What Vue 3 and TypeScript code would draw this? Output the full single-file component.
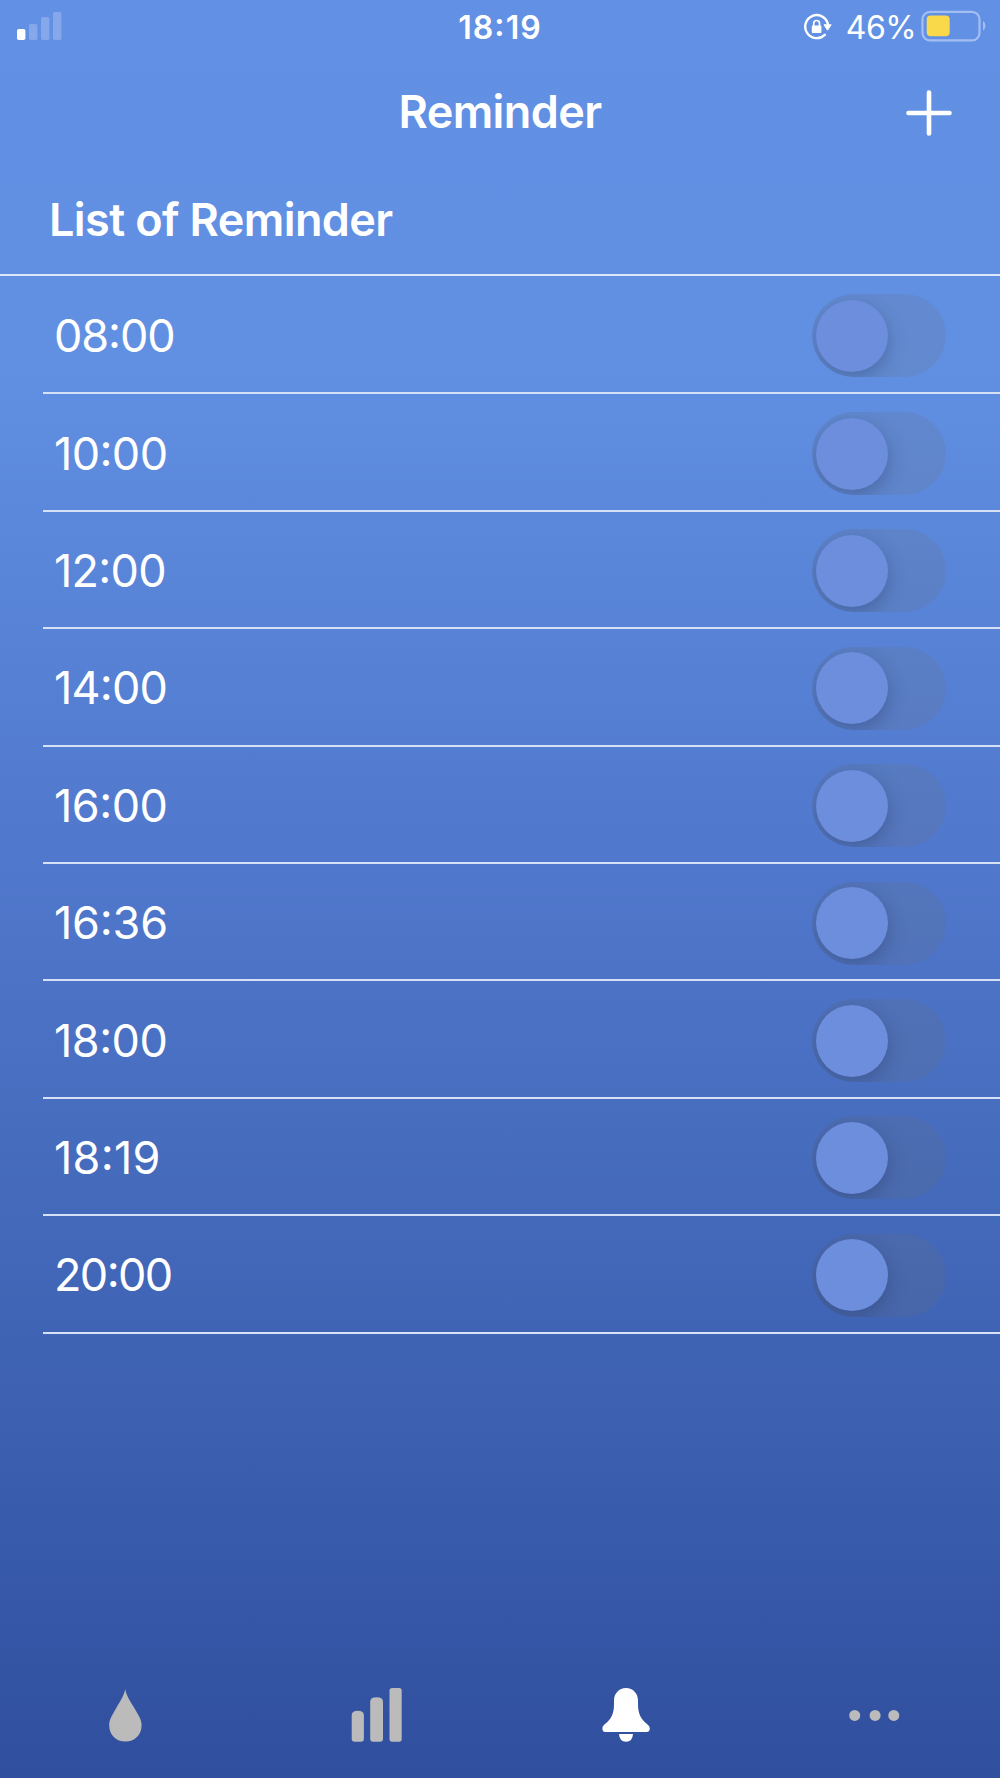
<script setup lang="ts">
import { ref } from 'vue'

interface Reminder {
  time: string
  tracking: number
  enabled: boolean
}

const schedule: [string, number][] = [
  ['08:00', -1.1],
  ['10:00', -0.6],
  ['12:00', -0.7],
  ['14:00', -0.8],
  ['16:00', -0.5],
  ['16:36', -0.2],
  ['18:00', -0.5],
  ['18:19', 0.3],
  ['20:00', -1.6],
]

const reminders = ref<Reminder[]>(
  schedule.map(([time, tracking]) => ({ time, tracking, enabled: false })),
)
</script>

<template>
  <div class="screen">
    <header class="status">
      <svg class="signal" width="50" height="34" viewBox="0 0 50 34" fill="#fff">
        <rect x="0" y="17" width="8.4" height="11" rx="1.8" />
        <g opacity=".22">
          <rect x="12" y="12" width="8.4" height="16" rx="1.8" />
          <rect x="24" y="5" width="8.4" height="23" rx="1.8" />
          <rect x="36" y="0" width="8.4" height="28" rx="1.8" />
        </g>
      </svg>
      <span class="clock">18:19</span>
      <div class="status-right">
        <svg class="lock" width="30" height="28" viewBox="0 0 30 28" fill="none" stroke="#fff">
          <path d="M21.8 21.8A11.5 11.5 0 1 1 24.9 11" stroke-width="2.4" stroke-linecap="round" />
          <path d="M21 11.8H28.2L24.5 17.2Z" fill="#fff" stroke-width="1" stroke-linejoin="round" />
          <rect x="8.8" y="12.5" width="9.6" height="7.6" rx="1.2" fill="#fff" stroke="none" />
          <path d="M10.7 13V10.4a2.9 2.9 0 0 1 5.8 0V13" stroke-width="1.7" />
        </svg>
        <span class="percent">46%</span>
        <svg class="battery" width="66" height="32" viewBox="0 0 66 32">
          <rect x="1.5" y="1.8" width="57" height="28.6" rx="7.5" fill="none" stroke="#a3bef2" stroke-width="2.2" />
          <rect x="5.7" y="5.6" width="23" height="20.6" rx="4" fill="#f9d84a" />
          <path d="M62 11q2.4 1.3 2.4 4.8t-2.4 4.8z" fill="#a3bef2" />
        </svg>
      </div>
    </header>

    <div class="titlebar">
      <h1>Reminder</h1>
      <button class="add" aria-label="Add reminder">
        <svg width="48" height="48" viewBox="0 0 48 48" stroke="#fff" stroke-width="4.6" stroke-linecap="round">
          <path d="M24 3.5V44.500M3.500 24H44.500" />
        </svg>
      </button>
    </div>

    <h2>List of Reminder</h2>

    <ul class="list">
      <li v-for="item in reminders" :key="item.time">
        <span class="time" :style="{ letterSpacing: item.tracking + 'px' }">{{ item.time }}</span>
        <button
          class="switch"
          :class="{ on: item.enabled }"
          role="switch"
          :aria-checked="item.enabled"
          :aria-label="item.time"
          @click="item.enabled = !item.enabled"
        >
          <span class="knob"></span>
        </button>
      </li>
    </ul>

    <nav class="tabs">
      <svg viewBox="0 0 60 60" width="60" height="60" fill="#bbb">
        <path d="M30.2 4C31 9 34 14.5 39 22.5C43.5 30 46.6 34.5 46.6 40.2C46.6 50 39.6 56.5 30.4 56.5C21.2 56.5 14.200 50 14.200 40.200C14.200 34.500 17.300 30 21.500 22.500C26.500 14.500 29.400 9 30.200 4Z" />
      </svg>
      <svg viewBox="0 0 60 60" width="60" height="60" fill="#bbb">
        <path d="M6.700 30.300Q6.700 25.800 12.800 25.800T18.900 30.300V53.700Q18.900 56.700 15.900 56.700H9.700Q6.700 56.700 6.700 53.700Z" />
        <path d="M25.200 16.500Q25.200 12.200 31.600 12.200T38 16.500V53.700Q38 56.700 35 56.700H28.200Q25.200 56.700 25.200 53.700Z" />
        <rect x="44.5" y="3" width="12.2" height="53.7" rx="2.6" />
      </svg>
      <svg viewBox="0 0 60 60" width="60" height="60" fill="#fff">
        <path d="M31 3C38 3 43 8.500 43 15.500V19C43 29.500 46 34 52 39C54 40.700 54.800 42 54.800 43.500C54.800 46 53.500 47 51.500 47H10.500C8.300 47 7.400 46 7.400 43.500C7.400 42 8 40.700 10 39C16 34 19 29.500 19 19V15.500C19 8.500 24 3 31 3Z" />
        <path d="M24 49H38Q37.500 56.800 31 56.800T24 49Z" />
      </svg>
      <svg viewBox="0 0 60 60" width="60" height="60" fill="#bbb">
        <circle cx="9.7" cy="30.4" r="5.5" />
        <circle cx="30.1" cy="30.4" r="5.5" />
        <circle cx="48.8" cy="30.4" r="5.5" />
      </svg>
    </nav>
  </div>
</template>

<style>
body {
  margin: 0;
}
</style>

<style scoped>
.screen {
  box-sizing: border-box;
  width: 1000px;
  height: 1778px;
  display: flex;
  flex-direction: column;
  overflow: hidden;
  color: #fff;
  font-family: Inter, 'Liberation Sans', sans-serif;
  font-feature-settings: 'calt' 1;
  background: linear-gradient(#6290e4 0, #6190e3 350px, #5078cc 850px, #4267b8 1270px, #304f9e 1778px);
}
button {
  padding: 0;
  border: 0;
  background: none;
}
.status {
  height: 54px;
  display: grid;
  grid-template-columns: 1fr auto 1fr;
  align-items: start;
}
.signal {
  margin: 12px 0 0 17px;
}
.clock {
  margin-top: 9px;
  font-size: 32px;
  line-height: 38px;
  font-weight: 600;
  letter-spacing: 1.1px;
}
.status-right {
  display: flex;
  justify-content: flex-end;
  padding-right: 13px;
}
.lock {
  margin: 13px 13px 0 0;
}
.percent {
  margin: 9px 5px 0 0;
  font-size: 32px;
  line-height: 38px;
  letter-spacing: -0.6px;
}
.battery {
  margin-top: 10px;
}
.titlebar {
  height: 116px;
  display: grid;
  grid-template-columns: 1fr auto 1fr;
  align-items: start;
}
h1,
h2 {
  margin: 0;
  font-size: 45px;
  line-height: 56px;
  font-weight: 600;
  letter-spacing: -0.6px;
}
h1 {
  grid-column: 2;
  margin-top: 30px;
}
.add {
  justify-self: end;
  height: 48px;
  margin: 34.5px 47px 0 0;
}
h2 {
  box-sizing: border-box;
  height: 106px;
  padding: 22px 0 0 49px;
  border-bottom: 2px solid #dce7fa;
}
.list {
  flex: 1;
  margin: 0;
  padding: 0 0 0 42.5px;
  list-style: none;
}
li {
  box-sizing: border-box;
  height: 117.4px;
  display: flex;
  align-items: center;
  justify-content: space-between;
  padding: 3px 54px 0 11.5px;
  border-bottom: 2px solid #d6e1f7;
}
li:first-child {
  height: 118.4px;
}
.time {
  font-size: 45px;
  line-height: 56px;
}
.switch {
  box-sizing: border-box;
  width: 134px;
  height: 83px;
  padding: 5px 4px;
  display: flex;
  align-items: center;
  border-radius: 42px;
  background: rgba(112, 112, 112, 0.16);
  overflow: hidden;
}
.switch.on {
  justify-content: flex-end;
}
.knob {
  width: 72px;
  height: 72px;
  border-radius: 50%;
  background: #6d8ddd;
  box-shadow: 0 6px 18px rgba(35, 50, 90, 0.34);
}
.tabs {
  height: 93px;
  display: grid;
  grid-template-columns: repeat(4, 250px);
  justify-items: center;
}
</style>
